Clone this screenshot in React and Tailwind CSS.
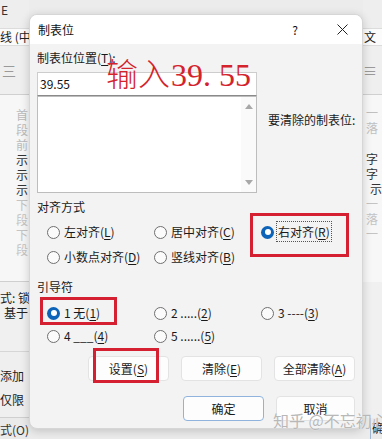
import React from 'react';

const font = { fontFamily: '"Noto Sans CJK SC", "Noto Sans", sans-serif' };

const Acc = ({ children }) => <span className="underline underline-offset-2">{children}</span>;

const Radio = ({ checked, children }) => (
  <div className="flex items-center gap-[4px] h-[20px]">
    {checked ? (
      <span className="w-[13px] h-[13px] rounded-full bg-[#0c63b8] flex items-center justify-center shrink-0">
        <span className="w-[6px] h-[6px] rounded-full bg-white" />
      </span>
    ) : (
      <span className="w-[13px] h-[13px] rounded-full border border-[#6f6f6f] bg-[#fbfbfb] shrink-0" />
    )}
    <span className="text-[12px] text-[#1a1a1a] leading-none whitespace-nowrap">{children}</span>
  </div>
);

const Btn = ({ children, w = 'w-[81px]', primary }) => (
  <div
    className={`${w} h-[25px] rounded-[4px] flex items-center justify-center text-[12px] text-[#1a1a1a] bg-[#fdfdfd] border ${
      primary ? 'border-[#8fb3dc]' : 'border-[#e3e3e3]'
    }`}
  >
    {children}
  </div>
);

const BgText = ({ children, className = '' }) => (
  <div className={`text-[12px] leading-[15px] whitespace-nowrap ${className}`}>{children}</div>
);

export default function App() {
  return (
    <div className="relative w-[382px] h-[439px] overflow-hidden bg-[#ececec]" style={font}>
      {/* background application */}
      <div className="flex h-full">
        <div className="w-[29px] flex flex-col overflow-hidden">
          <div className="h-[28px] bg-[#eeeeee] text-[12px] text-[#333] pl-[1px] pt-[1px]">E</div>
          <div className="h-[18px] bg-[#fbfbfb] border-y border-[#dcdcdc] text-[12px] leading-[16px] text-[#222] whitespace-nowrap">
            线 (中
          </div>
          <div className="h-[49px] border-b border-[#d0d0d0] bg-[#efefef] flex items-center text-[#9a9a9a] text-[14px] pl-[2px]">
            三
          </div>
          <div className="h-[187px] bg-[#f7f7f7] border-b border-[#cfcfcf] pl-[16px] pt-[12px] flex flex-col">
            <BgText className="text-[#bbbbbb]">首</BgText>
            <BgText className="text-[#bbbbbb]">段</BgText>
            <BgText className="text-[#bbbbbb]">前</BgText>
            <BgText className="text-[#333]">示</BgText>
            <BgText className="text-[#333]">示</BgText>
            <BgText className="text-[#333]">示</BgText>
            <BgText className="text-[#c4c4c4]">下</BgText>
            <BgText className="text-[#c4c4c4]">段</BgText>
            <BgText className="text-[#c4c4c4]">下</BgText>
            <BgText className="text-[#c4c4c4]">段</BgText>
          </div>
          <div className="h-[70px] bg-[#f0f0f0] border-b border-[#d6d6d6] pt-[8px]">
            <BgText className="text-[#222]">式: 锁</BgText>
            <BgText className="text-[#222] pl-[4px]">基于</BgText>
          </div>
          <div className="h-[66px] bg-[#efefef] border-b border-[#cfcfcf] pt-[12px]">
            <BgText className="text-[#222] leading-[24px]">添加</BgText>
            <BgText className="text-[#222] leading-[24px]">仅限</BgText>
          </div>
          <div className="flex-1 bg-[#eaeaea] pt-[4px]">
            <BgText className="text-[#333]">式(O)</BgText>
          </div>
        </div>
        <div className="flex-1" />
        <div className="w-[19px] flex flex-col overflow-hidden">
          <div className="h-[28px] bg-[#eeeeee]" />
          <div className="h-[18px] bg-[#fbfbfb] border-y border-[#dcdcdc] text-[12px] leading-[16px] text-[#222] pl-[1px]">文</div>
          <div className="h-[49px] border-b border-[#d0d0d0] bg-[#efefef] flex items-center text-[#9a9a9a] text-[14px]">
            ≡
          </div>
          <div className="h-[187px] bg-[#f7f7f7] pt-[10px] pl-[3px] flex flex-col">
            <BgText className="text-[#c0c0c0]">一</BgText>
            <BgText className="text-[#c0c0c0] mb-[16px]">落</BgText>
            <BgText className="text-[#333]">字</BgText>
            <BgText className="text-[#333]">字</BgText>
            <BgText className="text-[#333] pl-[4px]">示</BgText>
            <BgText className="text-[#c4c4c4]">一</BgText>
            <BgText className="text-[#c4c4c4]">落</BgText>
            <BgText className="text-[#c4c4c4]">一</BgText>
          </div>
          <div className="h-[136px] bg-[#f0f0f0]" />
          <div className="flex-1 bg-[#eaeaea] border-l border-[#9fb6d0] ml-[7px] pt-[2px]">
            <BgText className="text-[#222] pl-[1px]">确</BgText>
          </div>
        </div>
      </div>

      {/* dialog window */}
      <div className="absolute left-[29px] top-[14px] w-[334px] h-[415px] rounded-[8px] overflow-hidden bg-[#f3f3f3] border border-[#d6d6d6] shadow-[0_2px_10px_rgba(0,0,0,0.18)] flex flex-col">
        <div className="h-[29px] bg-white flex items-center pl-[8px] pr-[14px] shrink-0">
          <span className="text-[12px] text-[#111]">制表位</span>
          <span className="ml-auto text-[12px] text-[#111] mr-[39px]">?</span>
          <svg width="11" height="11" viewBox="0 0 11 11">
            <path d="M0.5 0.5 L10.5 10.5 M10.5 0.5 L0.5 10.5" stroke="#222" strokeWidth="1" />
          </svg>
        </div>

        <div className="flex flex-col pl-[7px]">
          <div className="flex">
            <div className="w-[220px] flex flex-col">
              <div className="text-[12px] text-[#1a1a1a] leading-[16px] mt-[6px] mb-[6px]">
                制表位位置(<Acc>T</Acc>):
              </div>
              <div className="h-[24px] bg-white border border-[#cdcdcd] border-b-[#8a8a8a] flex items-center pl-[2px] text-[12px] text-[#111]">
                39.55
              </div>
              <div className="h-[97px] bg-white border border-[#bdbdbd] flex justify-end">
                <div className="w-[15px] flex flex-col items-center justify-between py-[7px] bg-[#fafafa]">
                  <span className="w-0 h-0 border-l-[4px] border-r-[4px] border-b-[5px] border-l-transparent border-r-transparent border-b-[#a8a8a8]" />
                  <span className="w-0 h-0 border-l-[4px] border-r-[4px] border-t-[5px] border-l-transparent border-r-transparent border-t-[#a8a8a8]" />
                </div>
              </div>
            </div>
            <div className="pl-[11px] pt-[67px] text-[12px] text-[#1a1a1a] whitespace-nowrap">要清除的制表位:</div>
          </div>

          <div className="text-[12px] text-[#1a1a1a] leading-[16px] mt-[6px]">对齐方式</div>
          <div className="grid grid-cols-[107px_107px_107px] pl-[10px] mt-[7px] gap-y-[5px]">
            <Radio>左对齐(<Acc>L</Acc>)</Radio>
            <Radio>居中对齐(<Acc>C</Acc>)</Radio>
            <Radio checked>
              <span className="outline outline-1 outline-dotted outline-[#555] outline-offset-1">
                右对齐(<Acc>R</Acc>)
              </span>
            </Radio>
            <Radio>小数点对齐(<Acc>D</Acc>)</Radio>
            <Radio>竖线对齐(<Acc>B</Acc>)</Radio>
          </div>

          <div className="text-[12px] text-[#1a1a1a] leading-[16px] mt-[12px]">引导符</div>
          <div className="grid grid-cols-[107px_107px_107px] pl-[10px] mt-[8px] gap-y-[3px]">
            <Radio checked>1 无(<Acc>1</Acc>)</Radio>
            <Radio>2 .....(<Acc>2</Acc>)</Radio>
            <Radio>3 ----(<Acc>3</Acc>)</Radio>
            <Radio>4 ___(<Acc>4</Acc>)</Radio>
            <Radio>5 ......(<Acc>5</Acc>)</Radio>
          </div>

          <div className="flex gap-[12px] pl-[51px] mt-[10px]">
            <Btn>设置(<Acc>S</Acc>)</Btn>
            <Btn>清除(<Acc>E</Acc>)</Btn>
            <Btn>全部清除(<Acc>A</Acc>)</Btn>
          </div>

          <div className="flex gap-[12px] pl-[146px] mt-[15px]">
            <Btn primary>确定</Btn>
            <Btn w="w-[79px]">取消</Btn>
          </div>
        </div>
      </div>

      {/* annotations */}
      <div className="absolute left-[106px] top-[56px] flex items-baseline text-[#d4232c] leading-none">
        <span className="text-[32px]" style={{ fontFamily: '"Noto Sans CJK SC", sans-serif', fontWeight: 300 }}>输入</span>
        <span className="text-[32px] ml-[1px]" style={{ fontFamily: '"Liberation Serif", serif' }}>39. 55</span>
      </div>
      <div className="absolute left-[250px] top-[213px] w-[99px] h-[44px] border-[3px] border-[#d42030]" />
      <div className="absolute left-[40px] top-[297px] w-[77px] h-[28px] border-[3px] border-[#d42030]" />
      <div className="absolute left-[93px] top-[348px] w-[66px] h-[35px] border-[3px] border-[#d42030]" />
      <div className="absolute left-[273px] top-[408px] text-[16px] text-[#b8b8b8] whitespace-nowrap [text-shadow:0_0_1px_#fff]">
        知乎 @不忘初心
      </div>
    </div>
  );
}
